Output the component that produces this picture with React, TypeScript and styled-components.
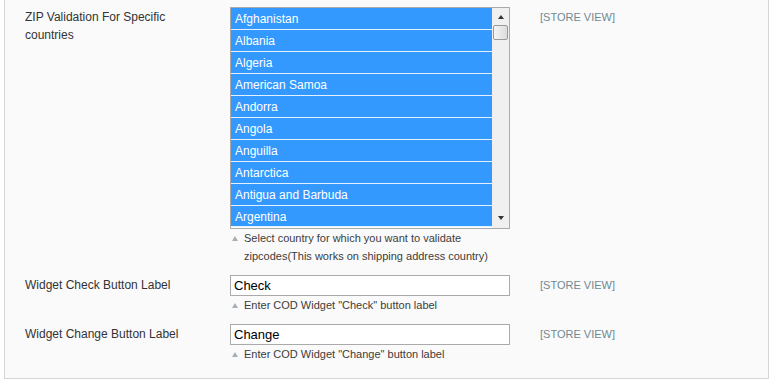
import React from 'react'
import styled, { createGlobalStyle } from 'styled-components'

const GlobalStyle = createGlobalStyle`
  body {
    margin: 0;
    background: #ffffff;
    font-family: "Liberation Sans", Arial, sans-serif;
  }
`

const countries = [
  'Afghanistan',
  'Albania',
  'Algeria',
  'American Samoa',
  'Andorra',
  'Angola',
  'Anguilla',
  'Antarctica',
  'Antigua and Barbuda',
  'Argentina',
]

const Panel = styled.div`
  margin-left: 4px;
  width: 765px;
  box-sizing: border-box;
  border: 1px solid #d6d6d6;
  border-top: none;
  background: #fafafa;
  padding: 7px 0 15px 20px;
  display: flex;
  flex-direction: column;
  gap: 10px;
`

const Row = styled.div`
  display: grid;
  grid-template-columns: 205px 280px 1fr;
  align-items: start;
`

const Label = styled.label`
  padding: 1px 20px 0 0;
  font-size: 12px;
  line-height: 18px;
  color: #333333;
`

const Value = styled.div`
  display: flex;
  flex-direction: column;
`

const Scope = styled.span`
  padding: 1px 0 0 30px;
  font-size: 11px;
  line-height: 18px;
  color: #6f8992;
`

const ListBox = styled.div`
  display: flex;
  height: 222px;
  box-sizing: border-box;
  border: 1px solid #aaaaaa;
  background: #ffffff;
`

const Options = styled.ul`
  flex: 1;
  margin: 0;
  padding: 0;
  list-style: none;
  overflow: hidden;
`

const Option = styled.li<{ $selected?: boolean }>`
  height: 21px;
  box-sizing: border-box;
  padding: 1px 0 0 4px;
  border-bottom: 1px solid #e4f0fc;
  font-size: 12px;
  line-height: 20px;
  color: ${(p) => (p.$selected ? '#ffffff' : '#000000')};
  background: ${(p) => (p.$selected ? '#3399ff' : '#ffffff')};
  white-space: nowrap;
  &:not(:last-child) {
    height: 22px;
  }
`

const ScrollBar = styled.div`
  width: 17px;
  display: flex;
  flex-direction: column;
  align-items: center;
  background: #f0f0f0;
`

const ScrollArrow = styled.span<{ $down?: boolean }>`
  width: 0;
  height: 0;
  margin: ${(p) => (p.$down ? 'auto 0 8px' : '7px 0 0')};
  border-left: 3.5px solid transparent;
  border-right: 3.5px solid transparent;
  ${(p) =>
    p.$down ? 'border-top: 4px solid #333333;' : 'border-bottom: 4px solid #333333;'}
`

const Thumb = styled.span`
  margin-top: 6px;
  width: 15px;
  height: 15px;
  box-sizing: border-box;
  border: 1px solid #9a9a9a;
  border-radius: 2px;
  background: linear-gradient(to right, #f4f4f4, #dcdcdc);
`

const TextInput = styled.input`
  width: 280px;
  height: 21px;
  box-sizing: border-box;
  margin: 0;
  padding: 0 3px;
  border: 1px solid #aaaaaa;
  background: #ffffff;
  font-family: "Liberation Sans", Arial, sans-serif;
  font-size: 13px;
  color: #000000;
  outline: none;
`

const Note = styled.p`
  margin: 0;
  display: flex;
  align-items: flex-start;
  font-size: 11px;
  line-height: 18px;
  color: #3c3c3c;
`

const NoteArrow = styled.span`
  flex: none;
  width: 0;
  height: 0;
  margin: 7px 6px 0 2px;
  border-left: 3.5px solid transparent;
  border-right: 3.5px solid transparent;
  border-bottom: 5px solid #a6aeb6;
`

type FieldNoteProps = { children: React.ReactNode }

const FieldNote: React.FC<FieldNoteProps> = ({ children }) => (
  <Note>
    <NoteArrow />
    <span>{children}</span>
  </Note>
)

export default function App() {
  return (
    <>
      <GlobalStyle />
      <Panel>
        <Row>
          <Label>ZIP Validation For Specific countries</Label>
          <Value>
            <ListBox>
              <Options>
                {countries.map((country) => (
                  <Option key={country} $selected>
                    {country}
                  </Option>
                ))}
              </Options>
              <ScrollBar>
                <ScrollArrow />
                <Thumb />
                <ScrollArrow $down />
              </ScrollBar>
            </ListBox>
            <FieldNote>
              Select country for which you want to validate zipcodes(This works
              on shipping address country)
            </FieldNote>
          </Value>
          <Scope>[STORE VIEW]</Scope>
        </Row>
        <Row>
          <Label>Widget Check Button Label</Label>
          <Value>
            <TextInput defaultValue="Check" />
            <FieldNote>Enter COD Widget "Check" button label</FieldNote>
          </Value>
          <Scope>[STORE VIEW]</Scope>
        </Row>
        <Row>
          <Label>Widget Change Button Label</Label>
          <Value>
            <TextInput defaultValue="Change" />
            <FieldNote>Enter COD Widget "Change" button label</FieldNote>
          </Value>
          <Scope>[STORE VIEW]</Scope>
        </Row>
      </Panel>
    </>
  )
}
